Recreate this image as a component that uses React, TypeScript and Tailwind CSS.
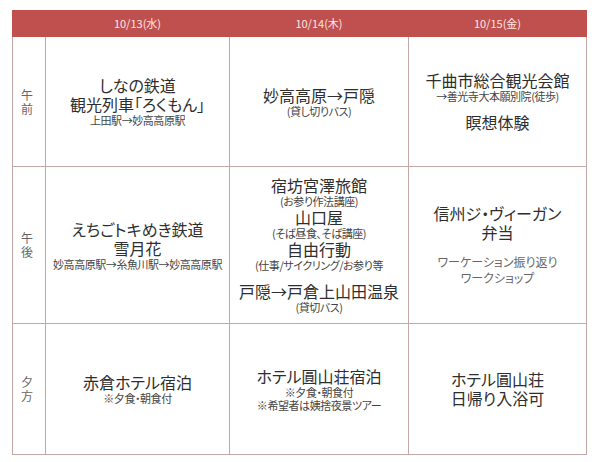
import React from 'react';

const font = { fontFamily: '"Noto Sans CJK JP", "Noto Sans", sans-serif' };

type Line = { text: string; kind: 'big' | 'small' | 'note'; gap?: boolean };

const Big = ({ children, gap }: { children: React.ReactNode; gap?: boolean }) => (
  <div className={`text-[16px] leading-[19px] text-[#2e2e2e] ${gap ? 'mt-[10px]' : ''}`}>{children}</div>
);

const Small = ({ children, gap }: { children: React.ReactNode; gap?: boolean }) => (
  <div className={`text-[11px] leading-[13px] tracking-[-0.04em] text-[#444] ${gap ? 'mt-[10px]' : ''}`}>{children}</div>
);

const Note = ({ children, gap }: { children: React.ReactNode; gap?: boolean }) => (
  <div className={`text-[12px] leading-[16px] text-[#666] ${gap ? 'mt-[12px]' : ''}`}>{children}</div>
);

function Cell({ lines }: { lines: Line[] }) {
  return (
    <td className="border border-[#c4a8a8] text-center align-middle px-0">
      {lines.map((l, i) =>
        l.kind === 'big' ? (
          <Big key={i} gap={l.gap}>{l.text}</Big>
        ) : l.kind === 'small' ? (
          <Small key={i} gap={l.gap}>{l.text}</Small>
        ) : (
          <Note key={i} gap={l.gap}>{l.text}</Note>
        )
      )}
    </td>
  );
}

const days = ['10/13(水)', '10/14(木)', '10/15(金)'];

const rows: { label: [string, string]; height: string; cells: Line[][] }[] = [
  {
    label: ['午', '前'],
    height: 'h-[130px]',
    cells: [
      [
        { text: 'しなの鉄道', kind: 'big' },
        { text: '観光列車「ろくもん」', kind: 'big' },
        { text: '上田駅→妙高高原駅', kind: 'small' },
      ],
      [
        { text: '妙高高原→戸隠', kind: 'big' },
        { text: '(貸し切りバス)', kind: 'small' },
      ],
      [
        { text: '千曲市総合観光会館', kind: 'big' },
        { text: '→善光寺大本願別院(徒歩)', kind: 'small' },
        { text: '瞑想体験', kind: 'big', gap: true },
      ],
    ],
  },
  {
    label: ['午', '後'],
    height: 'h-[157px]',
    cells: [
      [
        { text: 'えちごトキめき鉄道', kind: 'big' },
        { text: '雪月花', kind: 'big' },
        { text: '妙高高原駅→糸魚川駅→妙高高原駅', kind: 'small' },
      ],
      [
        { text: '宿坊宮澤旅館', kind: 'big' },
        { text: '(お参り作法講座)', kind: 'small' },
        { text: '山口屋', kind: 'big' },
        { text: '(そば昼食、そば講座)', kind: 'small' },
        { text: '自由行動', kind: 'big' },
        { text: '(仕事/サイクリング/お参り等', kind: 'small' },
        { text: '戸隠→戸倉上山田温泉', kind: 'big', gap: true },
        { text: '(貸切バス)', kind: 'small' },
      ],
      [
        { text: '信州ジ・ヴィーガン', kind: 'big' },
        { text: '弁当', kind: 'big' },
        { text: 'ワーケーション振り返り', kind: 'note', gap: true },
        { text: 'ワークショップ', kind: 'note' },
      ],
    ],
  },
  {
    label: ['夕', '方'],
    height: 'h-[131px]',
    cells: [
      [
        { text: '赤倉ホテル宿泊', kind: 'big' },
        { text: '※夕食・朝食付', kind: 'small' },
      ],
      [
        { text: 'ホテル圓山荘宿泊', kind: 'big' },
        { text: '※夕食・朝食付', kind: 'small' },
        { text: '※希望者は姨捨夜景ツアー', kind: 'small' },
      ],
      [
        { text: 'ホテル圓山荘', kind: 'big' },
        { text: '日帰り入浴可', kind: 'big' },
      ],
    ],
  },
];

export default function App() {
  return (
    <div className="w-[600px] h-[462px] bg-white pt-[10px] pl-[12px] [font-feature-settings:'palt']" style={font}>
      <table className="border-collapse table-fixed w-[574px]">
        <colgroup>
          <col className="w-[33px]" />
          <col className="w-[184px]" />
          <col className="w-[179px]" />
          <col className="w-[178px]" />
        </colgroup>
        <thead>
          <tr className="h-[26px]">
            <th className="bg-[#c0504d] border border-[#c0504d]" />
            {days.map(d => (
              <th
                key={d}
                className="bg-[#c0504d] border border-[#c0504d] text-[11px] font-normal text-[#fbe8e6] text-center"
              >
                {d}
              </th>
            ))}
          </tr>
        </thead>
        <tbody>
          {rows.map(r => (
            <tr key={r.label.join('')} className={r.height}>
              <td className="border border-[#c4a8a8] text-center align-middle text-[12px] leading-[14px] text-[#666]">
                <div className="-ml-[4px]">{r.label[0]}</div>
                <div className="-ml-[4px]">{r.label[1]}</div>
              </td>
              {r.cells.map((c, i) => (
                <Cell key={i} lines={c} />
              ))}
            </tr>
          ))}
        </tbody>
      </table>
    </div>
  );
}
